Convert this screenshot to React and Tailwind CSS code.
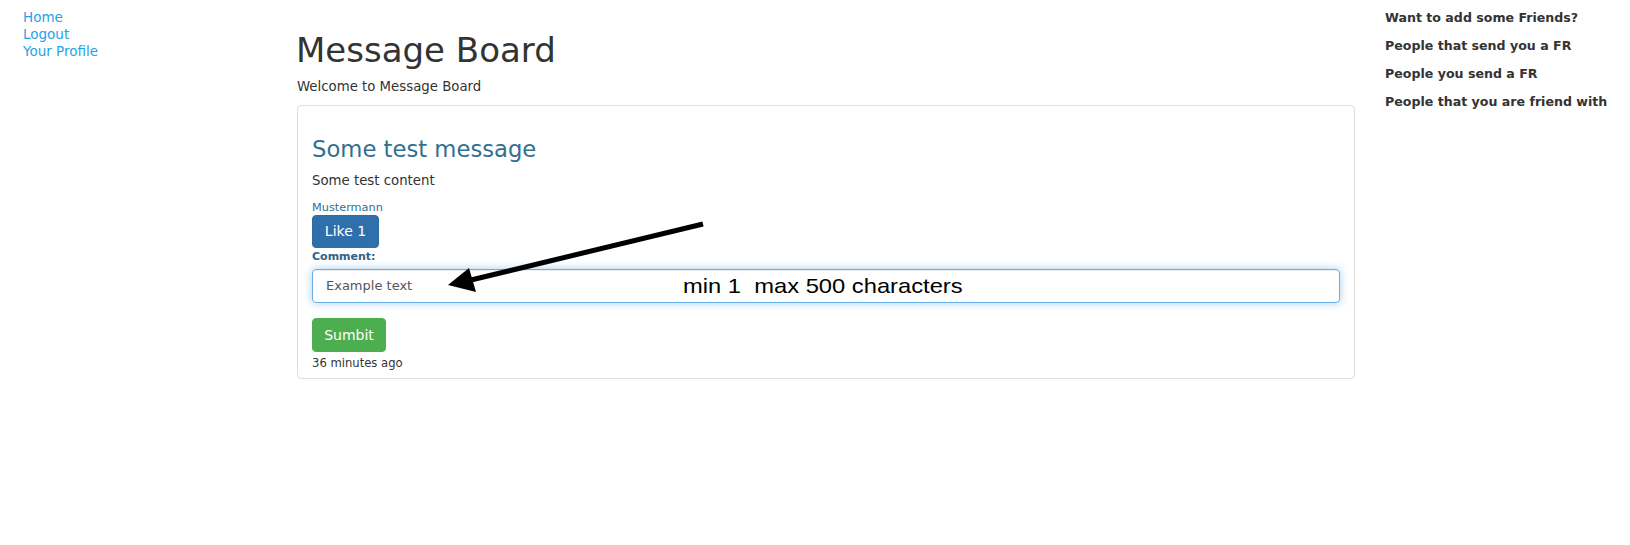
import React from 'react';

const navLinks = ['Home', 'Logout', 'Your Profile'];

const friendLinks = [
    'Want to add some Friends?',
    'People that send you a FR',
    'People you send a FR',
    'People that you are friend with',
];

function Annotation() {
    return (
        <>
            {/* Arrow drawn over the screenshot */}
            <svg
                className="absolute left-0 top-0 pointer-events-none"
                width="1630"
                height="545"
                viewBox="0 0 1630 545"
            >
                <line x1="703" y1="224" x2="471" y2="280" stroke="#000" strokeWidth="5" />
                <polygon points="448,285 469,268 476,292" fill="#000" />
            </svg>
            <div className="absolute left-[683px] top-[275px] origin-left scale-x-[1.13] whitespace-pre font-['Liberation_Sans',Arial,sans-serif] text-[21px] leading-[21px] text-black">
                {'min 1  max 500 characters'}
            </div>
        </>
    );
}

function MessageCard() {
    return (
        <div className="mt-[9px] w-[1058px] rounded-[4px] border border-[#dddddd] px-[14px] pt-[30px] pb-[8px]">
            <h2 className="text-[22.7px] leading-[26px] text-[#31708f]">Some test message</h2>
            <p className="mt-[10px] text-[13.3px] leading-[18px] text-[#333]">Some test content</p>

            <div className="mt-[11px] text-[11.3px] leading-[14px] text-[#31708f]">Mustermann</div>
            <button className="flex h-[33px] w-[67px] items-center justify-center rounded-[4px] border border-[#2e6da4] bg-[#2f6fac] text-[14px] text-white">
                Like 1
            </button>

            <label className="mt-[2px] block text-[11px] font-bold leading-[14px] text-[#2d6386]">Comment:</label>
            <div className="mt-[5px] flex h-[34px] items-center rounded-[4px] border border-[#66afe9] px-[13px] text-[13px] text-[#555] shadow-[inset_0_1px_1px_rgba(0,0,0,0.075),0_0_8px_rgba(102,175,233,0.6)]">
                Example text
            </div>

            <button className="mt-[15px] flex h-[34px] w-[74px] items-center justify-center rounded-[4px] border border-[#4cae4c] bg-[#4cae4f] text-[14px] text-white">
                Sumbit
            </button>
            <div className="mt-[4px] text-[11.6px] leading-[14px] text-[#333]">36 minutes ago</div>
        </div>
    );
}

export default function App() {
    return (
        <div className="relative h-[545px] w-[1630px] overflow-hidden bg-white font-['DejaVu_Sans',sans-serif] text-[#333]">
            <div className="flex">
                {/* Left nav */}
                <div className="w-[297px] shrink-0 pl-[23px] pt-[9px]">
                    {navLinks.map((l) => (
                        <a key={l} className="block text-[13.5px] leading-[17px] text-[#1fa2e8]">
                            {l}
                        </a>
                    ))}
                </div>

                {/* Main */}
                <div className="w-[1058px] shrink-0 pt-[30px]">
                    <h1 className="-ml-[1px] text-[34px] leading-[40px] text-[#333]">Message Board</h1>
                    <p className="mt-[8px] text-[13.3px] leading-[18px]">Welcome to Message Board</p>
                    <MessageCard />
                </div>

                {/* Right column */}
                <div className="ml-[30px] pt-[4px]">
                    {friendLinks.map((l) => (
                        <div key={l} className="text-[12.6px] font-bold leading-[28px] text-[#333]">
                            {l}
                        </div>
                    ))}
                </div>
            </div>

            <Annotation />
        </div>
    );
}
